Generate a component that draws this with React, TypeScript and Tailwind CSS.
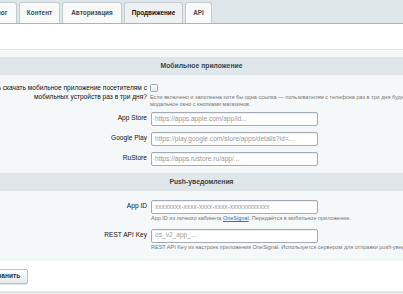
import React from "react";

function Tab({ children, className = "", active = false }: { children: React.ReactNode; className?: string; active?: boolean }) {
  return (
    <div
      className={
        "h-[21px] shrink-0 rounded-t-[3px] border border-b-0 border-[#c3cdd1] flex items-center justify-center text-[6.4px] font-bold leading-none " +
        (active ? "bg-[#edf1f2] text-[#111]" : "bg-[#f8fafa] text-[#4a4a4a]") +
        " " +
        className
      }
    >
      {children}
    </div>
  );
}

function Input({ placeholder }: { placeholder: string }) {
  return (
    <div className="w-[167px] h-[14px] bg-white border border-[#a3abb3] rounded-[2px] shadow-[inset_0_1px_0_rgba(0,0,0,0.06)] flex items-center pl-[3px] text-[6.6px] text-[#9a9a9a] whitespace-nowrap overflow-hidden leading-none">
      {placeholder}
    </div>
  );
}

function Label({ children }: { children: React.ReactNode }) {
  return (
    <div className="w-[147px] shrink-0 flex justify-end pt-[1px] text-[6.6px] leading-[9px] text-[#111] whitespace-nowrap">
      {children}
    </div>
  );
}

function Header({ children }: { children: React.ReactNode }) {
  return (
    <div className="h-[18px] bg-[#e0e7ea] flex items-center justify-center text-[6.8px] font-bold text-[#3a464b] leading-none">
      {children}
    </div>
  );
}

export default function App() {
  return (
    <div className="w-[403px] h-[294px] overflow-hidden bg-white font-['Liberation_Sans',Arial,sans-serif] text-black">
      {/* tabs */}
      <div className="h-[24px] bg-[#dfe6e9] border-b border-[#a9b4b9] flex items-end gap-[2px]">
        <Tab className="-ml-[27px] w-[44px]">Каталог</Tab>
        <Tab className="w-[41px]">Контент</Tab>
        <Tab className="w-[60px]">Авторизация</Tab>
        <Tab className="w-[59px]" active>
          Продвижение
        </Tab>
        <Tab className="w-[27px]">API</Tab>
      </div>

      {/* blank area */}
      <div className="h-[25px] bg-white" />

      {/* section */}
      <div className="border-t border-[#dde3e6] bg-[#f5f8f9] pt-[7px] pb-[11px]">
        <Header>Мобильное приложение</Header>

        <div className="flex mt-[8px]">
          <div className="w-[147px] shrink-0 flex flex-col items-end text-[6.6px] leading-[9px] text-[#111] whitespace-nowrap">
            <span>Предлагать скачать мобильное приложение посетителям с</span>
            <span>мобильных устройств раз в три дня?</span>
          </div>
          <div className="pl-[3px] flex flex-col">
            <div className="mt-[1px] w-[8px] h-[8px] border border-[#9ea6ad] rounded-[1.5px] bg-gradient-to-b from-[#fdfdfd] to-[#e6eaec]" />
            <div className="mt-[2px] text-[5.5px] leading-[6.5px] text-[#767676] whitespace-nowrap">
              <div>Если включено и заполнена хотя бы одна ссылка — пользователям с телефона раз в три дня будет показано</div>
              <div>модальное окно с кнопками магазинов.</div>
            </div>
          </div>
        </div>

        <div className="flex mt-[5px]">
          <Label>App Store</Label>
          <div className="pl-[4px]">
            <Input placeholder="https://apps.apple.com/app/id..." />
          </div>
        </div>
        <div className="flex mt-[6px]">
          <Label>Google Play</Label>
          <div className="pl-[4px]">
            <Input placeholder="https://play.google.com/store/apps/details?id=..." />
          </div>
        </div>
        <div className="flex mt-[6px]">
          <Label>RuStore</Label>
          <div className="pl-[4px]">
            <Input placeholder="https://apps.rustore.ru/app/..." />
          </div>
        </div>

        <div className="mt-[7px]">
          <Header>Push-уведомления</Header>
        </div>

        <div className="flex mt-[9px]">
          <Label>App ID</Label>
          <div className="pl-[4px]">
            <Input placeholder="xxxxxxxx-xxxx-xxxx-xxxx-xxxxxxxxxxxx" />
            <div className="mt-[1px] text-[5.5px] leading-[6.5px] text-[#767676] whitespace-nowrap">
              App ID из личного кабинета <span className="text-[#2a6fc9] underline">OneSignal</span>. Передаётся в мобильное приложение.
            </div>
          </div>
        </div>
        <div className="flex mt-[7px]">
          <Label>REST API Key</Label>
          <div className="pl-[4px]">
            <Input placeholder="os_v2_app_..." />
            <div className="mt-[1px] text-[5.5px] leading-[6.5px] text-[#767676] whitespace-nowrap">
              REST API Key из настроек приложения OneSignal. Используется сервером для отправки push-уведомлений.
            </div>
          </div>
        </div>
      </div>

      {/* button area */}
      <div className="bg-white pt-[8px] pb-[7px] flex">
        <div className="-ml-[23px] h-[15px] px-[7px] flex items-center rounded-[2px] border border-[#b9c1c5] bg-gradient-to-b from-[#ffffff] to-[#e5eaec] shadow-[0_1px_1px_rgba(0,0,0,0.12)] text-[6.6px] font-bold text-[#333] leading-none">
          Сохранить
        </div>
      </div>

      <div className="h-[10px] bg-[#e2e8ea]" />
    </div>
  );
}
